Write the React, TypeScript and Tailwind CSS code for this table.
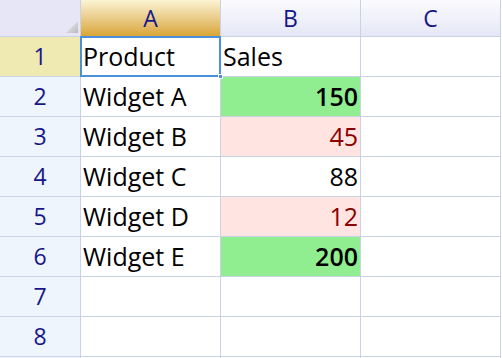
import React from "react";

const rows: { name: string; sales: string; kind: "green" | "red" | "plain" }[] = [
  { name: "Widget A", sales: "150", kind: "green" },
  { name: "Widget B", sales: "45", kind: "red" },
  { name: "Widget C", sales: "88", kind: "plain" },
  { name: "Widget D", sales: "12", kind: "red" },
  { name: "Widget E", sales: "200", kind: "green" },
];

const font = { fontFamily: '"Open Sans", "Noto Sans", sans-serif' };

export default function App() {
  const line = "border-[#c9d3e4]";
  const rowHead = `flex items-center justify-center border-r border-b ${line} bg-[#eef5fd] text-[23px] text-[#16168a]`;
  const cell = `flex items-center border-r border-b ${line} bg-white text-[25px] text-black`;
  return (
    <div
      className="grid h-[358px] w-[502px] overflow-hidden bg-white grid-cols-[81px_140px_140px_140px_1px] grid-rows-[37px_repeat(9,40px)]"
      style={font}
    >
      {/* header row */}
      <div className={`relative border-r border-b ${line} bg-[#e6e6f6]`}>
        <div className="absolute bottom-[3px] right-[2px] h-[12px] w-[12px] bg-gradient-to-br from-[#f2f2f2] to-[#b8b8c0] [clip-path:polygon(100%_0,100%_100%,0_100%)]" />
      </div>
      <div className={`flex items-center justify-center border-r border-b ${line} bg-gradient-to-b from-[#fbf3d2] to-[#d9a530] text-[23px] text-[#16168a]`}>
        A
      </div>
      <div className={`flex items-center justify-center border-r border-b ${line} bg-gradient-to-b from-[#fbfbfe] to-[#e5e7f6] text-[23px] text-[#16168a]`}>
        B
      </div>
      <div className={`flex items-center justify-center border-r border-b ${line} bg-gradient-to-b from-[#fbfbfe] to-[#e5e7f6] text-[23px] text-[#16168a]`}>
        C
      </div>
      <div className="bg-white" />

      {/* row 1 */}
      <div className={`flex items-center justify-center border-r border-b ${line} bg-[#efe9b2] text-[23px] text-[#16168a]`}>
        1
      </div>
      <div className={`relative ${cell} pl-[2px]`}>
        Product
        <div className="pointer-events-none absolute left-[-1px] top-[-1px] h-[41px] w-[141px] border-2 border-[#4a90dc]" />
        <div className="absolute bottom-[-3px] right-[-3px] h-[5px] w-[5px] border border-white bg-[#4a90dc]" />
      </div>
      <div className={`${cell} pl-[2px]`}>Sales</div>
      <div className={cell} />
      <div className="bg-white" />

      {rows.map((r, i) => (
        <React.Fragment key={r.name}>
          <div className={rowHead}>{i + 2}</div>
          <div className={`${cell} pl-[2px]`}>{r.name}</div>
          <div
            className={`flex items-center justify-end border-r border-b ${line} pr-[2px] text-[25px] ${
              r.kind === "green"
                ? "bg-[#90ee90] font-semibold text-black"
                : r.kind === "red"
                ? "bg-[#ffe4e1] text-[#8b0000]"
                : "bg-white text-black"
            }`}
          >
            {r.sales}
          </div>
          <div className={cell} />
          <div className="bg-white" />
        </React.Fragment>
      ))}

      {[7, 8].map((n) => (
        <React.Fragment key={n}>
          <div className={rowHead}>{n}</div>
          <div className={cell} />
          <div className={cell} />
          <div className={cell} />
          <div className="bg-white" />
        </React.Fragment>
      ))}
      <div className={`border-r border-b ${line} bg-[#eef5fd]`} />
      <div className={`border-r border-b ${line}`} />
      <div className={`border-r border-b ${line}`} />
      <div className={`border-r border-b ${line}`} />
      <div className="bg-white" />
    </div>
  );
}
